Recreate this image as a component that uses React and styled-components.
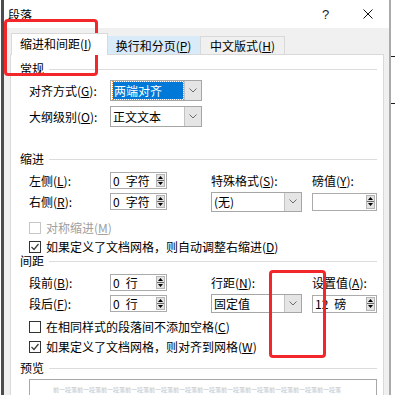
import React from 'react';
import styled, { createGlobalStyle } from 'styled-components';

const GlobalStyle = createGlobalStyle`
  html, body {
    margin: 0;
    padding: 0;
    background: #fff;
  }
  body {
    font-family: "Noto Sans CJK SC", "Noto Sans", sans-serif;
    font-size: 12px;
    color: #000;
  }
`;

const Screen = styled.div`
  position: relative;
  display: flex;
  width: 395px;
  height: 395px;
  padding-left: 1px;
  box-sizing: border-box;
  overflow: hidden;
  background: #fff;
`;

const Dialog = styled.div`
  flex: none;
  width: 390px;
  box-sizing: border-box;
  display: flex;
  flex-direction: column;
  border-left: 3px solid #4d4d4d;
  border-right: 2px solid #ababab;
  background: #f0f0f0;
`;

const Outside = styled.div`
  flex: 1;
  display: flex;
  flex-direction: column;
`;

const Tick = styled.div`
  flex: none;
  height: 1px;
  margin-top: ${p => p.$gap}px;
  background: #1a1a1a;
`;

const TitleBar = styled.div`
  flex: none;
  display: flex;
  align-items: center;
  height: 28px;
  padding-left: 4px;
  background: #fff;
`;

const Title = styled.span`
  flex: 1;
  line-height: 14px;
  margin-top: 1px;
`;

const Help = styled.span`
  width: 6px;
  margin-right: 35px;
  font-family: "Liberation Sans", sans-serif;
  font-size: 13px;
  color: #222;
`;

const Close = styled.svg`
  width: 10px;
  height: 10px;
  margin-right: 16px;
`;

const TabRow = styled.div`
  flex: none;
  position: relative;
  z-index: 1;
  display: flex;
  align-items: flex-end;
  height: 22px;
  margin: 5px 0 -1px;
  padding-left: 7px;
`;

const Tab = styled.div`
  box-sizing: border-box;
  width: ${p => p.$w}px;
  height: ${p => (p.$active ? 22 : 18)}px;
  margin-bottom: ${p => (p.$active ? 0 : 1)}px;
  display: flex;
  align-items: center;
  justify-content: ${p => (p.$active ? 'flex-start' : 'center')};
  padding-left: ${p => (p.$active ? 8 : 0)}px;
  padding-bottom: ${p => (p.$active ? 2 : 0)}px;
  border: 1px solid ${p => p.$border};
  border-bottom: none;
  border-left-width: ${p => (p.$noLeft ? 0 : 1)}px;
  background: ${p => p.$bg};
  white-space: nowrap;
`;

const Panel = styled.div`
  flex: 1 0 auto;
  box-sizing: border-box;
  width: 374px;
  margin-left: 6px;
  padding: 7px 6px 0 9px;
  border: 1px solid #d9d9d9;
  border-bottom: none;
  background: #fff;
`;

const SectionHeader = styled.div`
  display: flex;
  align-items: center;
  height: 14px;
  line-height: 14px;
  margin-top: ${p => p.$mt || 0}px;
  &::after {
    content: '';
    flex: 1;
    height: 1px;
    margin-left: 5px;
    background: #dcdcdc;
  }
`;

const FieldRow = styled.div`
  display: flex;
  align-items: center;
  height: 21px;
  padding-left: 9px;
  margin-top: ${p => p.$mt || 0}px;
`;

const Label = styled.span`
  width: ${p => (p.$w ? `${p.$w}px` : 'auto')};
  flex: none;
  white-space: nowrap;
  line-height: 16px;
`;

const Grid = styled.div`
  display: grid;
  grid-template-columns: 81px 57px 44px 91px 10px 65px;
  grid-template-rows: 21px 21px;
  align-items: center;
  padding-left: 9px;
  margin-top: ${p => p.$mt || 0}px;
`;

const Cell = styled.div`
  grid-column: ${p => p.$col};
  grid-row: ${p => p.$row};
  display: flex;
  align-items: center;
  white-space: nowrap;
`;

const Select = styled.div`
  box-sizing: border-box;
  display: flex;
  width: ${p => p.$w}px;
  height: ${p => p.$h}px;
  border: 1px solid #a6a6a6;
  background: #fff;
`;

const SelectValue = styled.div`
  flex: 1;
  display: flex;
  align-items: center;
  padding-left: 2px;
`;

const Highlight = styled.span`
  display: flex;
  align-items: center;
  width: 70px;
  height: 17px;
  padding-left: 1px;
  box-sizing: border-box;
  background: #0078d7;
  color: #fff;
  outline: 1px dotted #e8902c;
`;

const DropButton = styled.div`
  width: 16px;
  display: flex;
  align-items: center;
  justify-content: center;
  border-left: 1px solid #c2c2c2;
  background: #e5e5e5;
`;

const Spinner = styled.div`
  box-sizing: border-box;
  display: flex;
  width: ${p => p.$w}px;
  height: ${p => p.$h || 17}px;
  padding: 1px;
  border: 1px solid #ababab;
  background: #fff;
`;

const SpinValue = styled.div`
  flex: 1;
  display: flex;
  align-items: center;
  gap: 6px;
  padding-left: 1px;
`;

const SpinButtons = styled.div`
  width: 9px;
  display: flex;
  flex-direction: column;
  box-sizing: border-box;
  border: 1px solid #b4b4b4;
  background: #e3e3e3;
`;

const SpinHalf = styled.div`
  flex: 1;
  display: flex;
  align-items: center;
  justify-content: center;
  border-top: ${p => (p.$lower ? '1px solid #6a6a6a' : 'none')};
`;

const CheckRow = styled.div`
  display: flex;
  align-items: center;
  gap: 5px;
  height: 15px;
  padding-left: 9px;
  margin-top: ${p => p.$mt || 0}px;
  color: ${p => (p.$disabled ? '#a0a0a0' : '#000')};
  white-space: nowrap;
`;

const Box = styled.span`
  box-sizing: border-box;
  flex: none;
  width: 12px;
  height: 12px;
  display: flex;
  align-items: center;
  justify-content: center;
  border: 1px solid ${p => (p.$disabled ? '#c6c6c6' : '#333')};
  background: #fff;
`;

const Preview = styled.div`
  box-sizing: border-box;
  width: 348px;
  height: 30px;
  margin: 4px 0 0 9px;
  padding: 6px 0 0 23px;
  border: 1px solid #a8a8a8;
  font-size: 6px;
  line-height: 8px;
  color: #c2c2c2;
  white-space: nowrap;
  overflow: hidden;
`;

const RedFrame = styled.div`
  position: absolute;
  left: ${p => p.$x}px;
  top: ${p => p.$y}px;
  width: ${p => p.$w}px;
  height: ${p => p.$h}px;
  box-sizing: border-box;
  border: 3px solid #f3262a;
  border-radius: 4px;
  pointer-events: none;
`;

const Chevron = () => (
  <svg width="8" height="5" viewBox="0 0 8 5">
    <polyline points="0.5,0.5 4,4 7.5,0.5" fill="none" stroke="#6d6d6d" strokeWidth="1" />
  </svg>
);

const Arrow = ({ down }) => (
  <svg width="5" height="3" viewBox="0 0 5 3">
    <polygon points={down ? '0,0 5,0 2.5,3' : '0,3 5,3 2.5,0'} fill="#000" />
  </svg>
);

const Check = () => (
  <svg width="10" height="10" viewBox="0 0 10 10">
    <polyline points="1.5,5 4,7.5 8.5,2" fill="none" stroke="#3a3a3a" strokeWidth="1.2" />
  </svg>
);

const Key = ({ k }) => (
  <>
    (<u>{k}</u>)
  </>
);

const DropSelect = ({ w, h, children }) => (
  <Select $w={w} $h={h}>
    <SelectValue>{children}</SelectValue>
    <DropButton>
      <Chevron />
    </DropButton>
  </Select>
);

const Spin = ({ w, h, num, unit }) => (
  <Spinner $w={w} $h={h}>
    <SpinValue>
      {num && <span>{num}</span>}
      {unit && <span>{unit}</span>}
    </SpinValue>
    <SpinButtons>
      <SpinHalf>
        <Arrow />
      </SpinHalf>
      <SpinHalf $lower>
        <Arrow down />
      </SpinHalf>
    </SpinButtons>
  </Spinner>
);

const CheckItem = ({ checked, disabled, children, mt }) => (
  <CheckRow $mt={mt} $disabled={disabled}>
    <Box $disabled={disabled}>{checked && <Check />}</Box>
    <span>{children}</span>
  </CheckRow>
);

export default function App() {
  return (
    <>
      <GlobalStyle />
      <Screen>
        <Dialog>
          <TitleBar>
            <Title>段落</Title>
            <Help>?</Help>
            <Close viewBox="0 0 10 10">
              <path d="M0.5 0.5 L9.5 9.5 M9.5 0.5 L0.5 9.5" stroke="#111" strokeWidth="1" />
            </Close>
          </TitleBar>

          <TabRow>
            <Tab $active $w={97} $bg="#fff" $border="#d9d9d9">
              缩进和间距<Key k="I" />
            </Tab>
            <Tab $w={92} $bg="#d9eaf8" $border="#d9eaf8" $noLeft>
              换行和分页<Key k="P" />
            </Tab>
            <Tab $w={85} $bg="#f0f0f0" $border="#d9d9d9">
              中文版式<Key k="H" />
            </Tab>
          </TabRow>

          <Panel>
            <SectionHeader>常规</SectionHeader>
            <FieldRow $mt={4}>
              <Label $w={81}>对齐方式<Key k="G" />:</Label>
              <DropSelect w={92} h={21}>
                <Highlight>两端对齐</Highlight>
              </DropSelect>
            </FieldRow>
            <FieldRow $mt={5}>
              <Label $w={81}>大纲级别<Key k="O" />:</Label>
              <DropSelect w={92} h={21}>正文文本</DropSelect>
            </FieldRow>

            <SectionHeader $mt={25}>缩进</SectionHeader>
            <Grid $mt={4}>
              <Cell $col={1} $row={1}>
                <Label>左侧<Key k="L" />:</Label>
              </Cell>
              <Cell $col={2} $row={1}>
                <Spin w={57} num="0" unit="字符" />
              </Cell>
              <Cell $col="4 / 6" $row={1}>
                <Label>特殊格式<Key k="S" />:</Label>
              </Cell>
              <Cell $col={6} $row={1}>
                <Label>磅值<Key k="Y" />:</Label>
              </Cell>
              <Cell $col={1} $row={2}>
                <Label>右侧<Key k="R" />:</Label>
              </Cell>
              <Cell $col={2} $row={2}>
                <Spin w={57} num="0" unit="字符" />
              </Cell>
              <Cell $col={4} $row={2}>
                <DropSelect w={91} h={20}>(无)</DropSelect>
              </Cell>
              <Cell $col={6} $row={2}>
                <Spin w={65} h={18} />
              </Cell>
            </Grid>
            <CheckItem disabled mt={8}>
              对称缩进<Key k="M" />
            </CheckItem>
            <CheckItem checked mt={4}>
              如果定义了文档网格，则自动调整右缩进<Key k="D" />
            </CheckItem>

            <SectionHeader>间距</SectionHeader>
            <Grid $mt={4}>
              <Cell $col={1} $row={1}>
                <Label>段前<Key k="B" />:</Label>
              </Cell>
              <Cell $col={2} $row={1}>
                <Spin w={57} num="0" unit="行" />
              </Cell>
              <Cell $col="4 / 6" $row={1}>
                <Label>行距<Key k="N" />:</Label>
              </Cell>
              <Cell $col={6} $row={1}>
                <Label>设置值<Key k="A" />:</Label>
              </Cell>
              <Cell $col={1} $row={2}>
                <Label>段后<Key k="F" />:</Label>
              </Cell>
              <Cell $col={2} $row={2}>
                <Spin w={57} num="0" unit="行" />
              </Cell>
              <Cell $col={4} $row={2}>
                <DropSelect w={91} h={19}>固定值</DropSelect>
              </Cell>
              <Cell $col={6} $row={2}>
                <Spin w={65} h={18} num="12" unit="磅" />
              </Cell>
            </Grid>
            <CheckItem mt={5}>
              在相同样式的段落间不添加空格<Key k="C" />
            </CheckItem>
            <CheckItem checked mt={5}>
              如果定义了文档网格，则对齐到网格<Key k="W" />
            </CheckItem>

            <SectionHeader $mt={7}>预览</SectionHeader>
            <Preview>{'前一段落'.repeat(12)}</Preview>
          </Panel>
        </Dialog>
        <Outside>
          <Tick $gap={56} />
          <Tick $gap={46} />
        </Outside>
        <RedFrame $x={4} $y={19} $w={94} $h={57} />
        <RedFrame $x={269} $y={270} $w={57} $h={88} />
      </Screen>
    </>
  );
}
